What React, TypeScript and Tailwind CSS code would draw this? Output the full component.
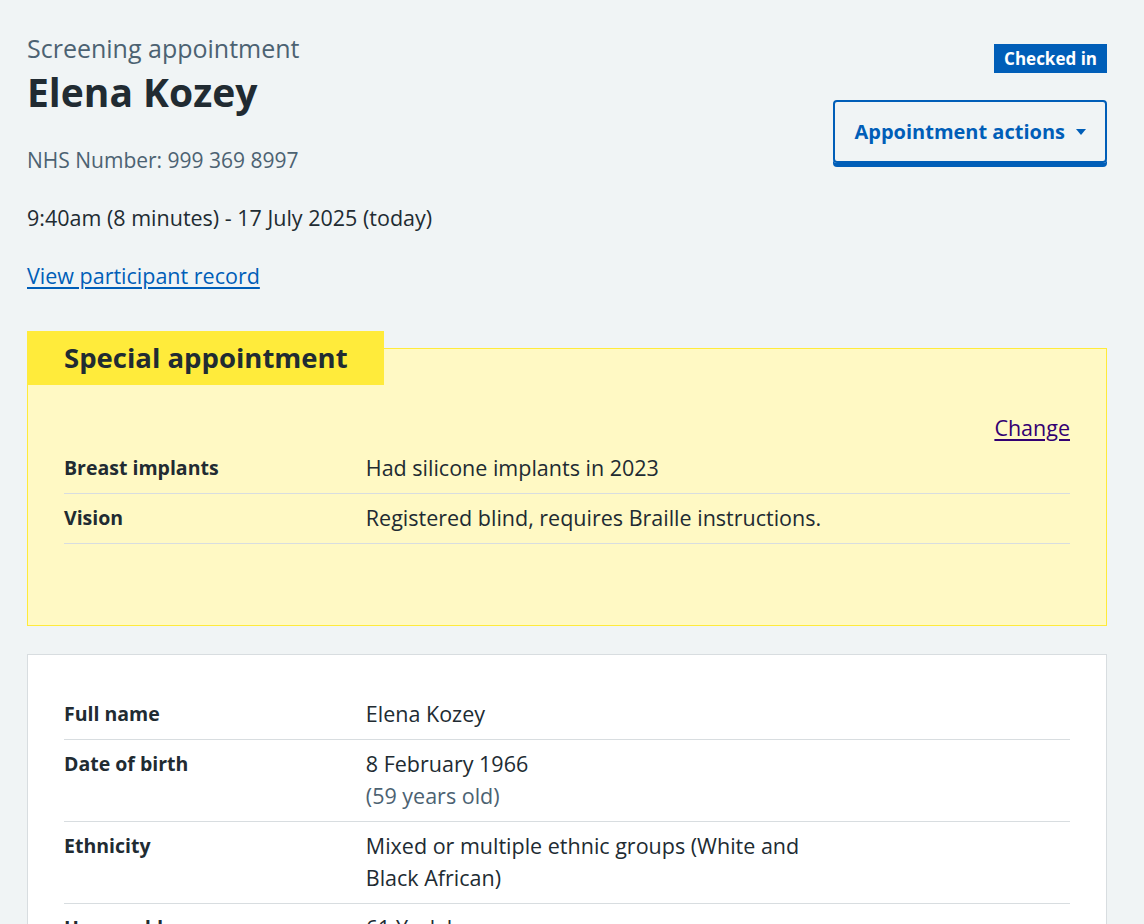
import React from 'react';

type Row = { label: string; value: React.ReactNode };

const specialRows: Row[] = [
    { label: 'Breast implants', value: 'Had silicone implants in 2023' },
    { label: 'Vision', value: 'Registered blind, requires Braille instructions.' },
];

const detailRows: Row[] = [
    { label: 'Full name', value: 'Elena Kozey' },
    {
        label: 'Date of birth',
        value: (
            <>
                8 February 1966
                <span className="block text-[#4c6272]">(59 years old)</span>
            </>
        ),
    },
    { label: 'Ethnicity', value: 'Mixed or multiple ethnic groups (White and Black African)' },
    { label: 'Home address', value: '61 York Lane' },
];

function SummaryList({ rows }: { rows: Row[] }) {
    return (
        <dl className="w-full">
            {rows.map((row) => (
                <div key={row.label} className="grid grid-cols-[30%_50%_20%] border-b border-[#d8dde0] pt-[8px] pb-[9px]">
                    <dt className="pr-[24px] text-[19.5px] font-bold">{row.label}</dt>
                    <dd className="pr-[24px]">{row.value}</dd>
                    <dd />
                </div>
            ))}
        </dl>
    );
}

export default function App() {
    return (
        <div className="min-h-screen bg-[#f0f4f5] font-['Open_Sans',sans-serif] text-[21.5px] leading-[32px] text-[#212b32]">
            <div className="pl-[27px] pr-[37px] pt-[32px] pb-[40px]">
                {/* Header */}
                <div className="flex justify-between">
                    <div>
                        <span className="block text-[25px] leading-[32px] text-[#4c6272]">Screening appointment</span>
                        <h1 className="mt-[4px] text-[39px] font-bold leading-[48px]">Elena Kozey</h1>
                        <p className="mt-[30px] text-[21px] leading-[28px] text-[#4c6272]">NHS Number: 999 369 8997</p>
                        <p className="mt-[30px] leading-[28px]">9:40am (8 minutes) - 17 July 2025 (today)</p>
                        <p className="mt-[30px] leading-[28px]">
                            <a href="#" className="text-[#005eb8] underline underline-offset-[3px]">
                                View participant record
                            </a>
                        </p>
                    </div>
                    <div className="flex flex-col items-end pt-[12px]">
                        <strong className="flex h-[29px] items-center bg-[#005eb8] px-[10px] text-[17px] font-bold text-white">
                            Checked in
                        </strong>
                        <button className="mt-[27px] flex h-[63px] items-center gap-[11px] rounded-[4px] border-2 border-[#005eb8] px-[19px] text-[20px] font-bold text-[#005eb8] shadow-[0_4px_0_#005eb8]">
                            Appointment actions
                            <svg width="10" height="6" viewBox="0 0 10 6" aria-hidden="true">
                                <path d="M0 0h10L5 6z" fill="#005eb8" />
                            </svg>
                        </button>
                    </div>
                </div>

                {/* Special appointment */}
                <section className="mt-[58px] border border-[#ffeb3b] bg-[#fff9c4] pb-[81px]">
                    <h2 className="-ml-px -mt-[18px] block w-fit bg-[#ffeb3b] pl-[37px] pr-[36px] text-[27.5px] font-bold leading-[54px]">
                        Special appointment
                    </h2>
                    <div className="px-[36px]">
                        <div className="mt-[27px] text-right">
                            <a href="#" className="text-[#330072] underline underline-offset-[3px]">
                                Change
                            </a>
                        </div>
                        <SummaryList rows={specialRows} />
                    </div>
                </section>

                {/* Participant details */}
                <section className="mt-[28px] border border-[#d8dde0] bg-white px-[36px] pt-[35px] pb-[32px]">
                    <SummaryList rows={detailRows} />
                </section>
            </div>
        </div>
    );
}
